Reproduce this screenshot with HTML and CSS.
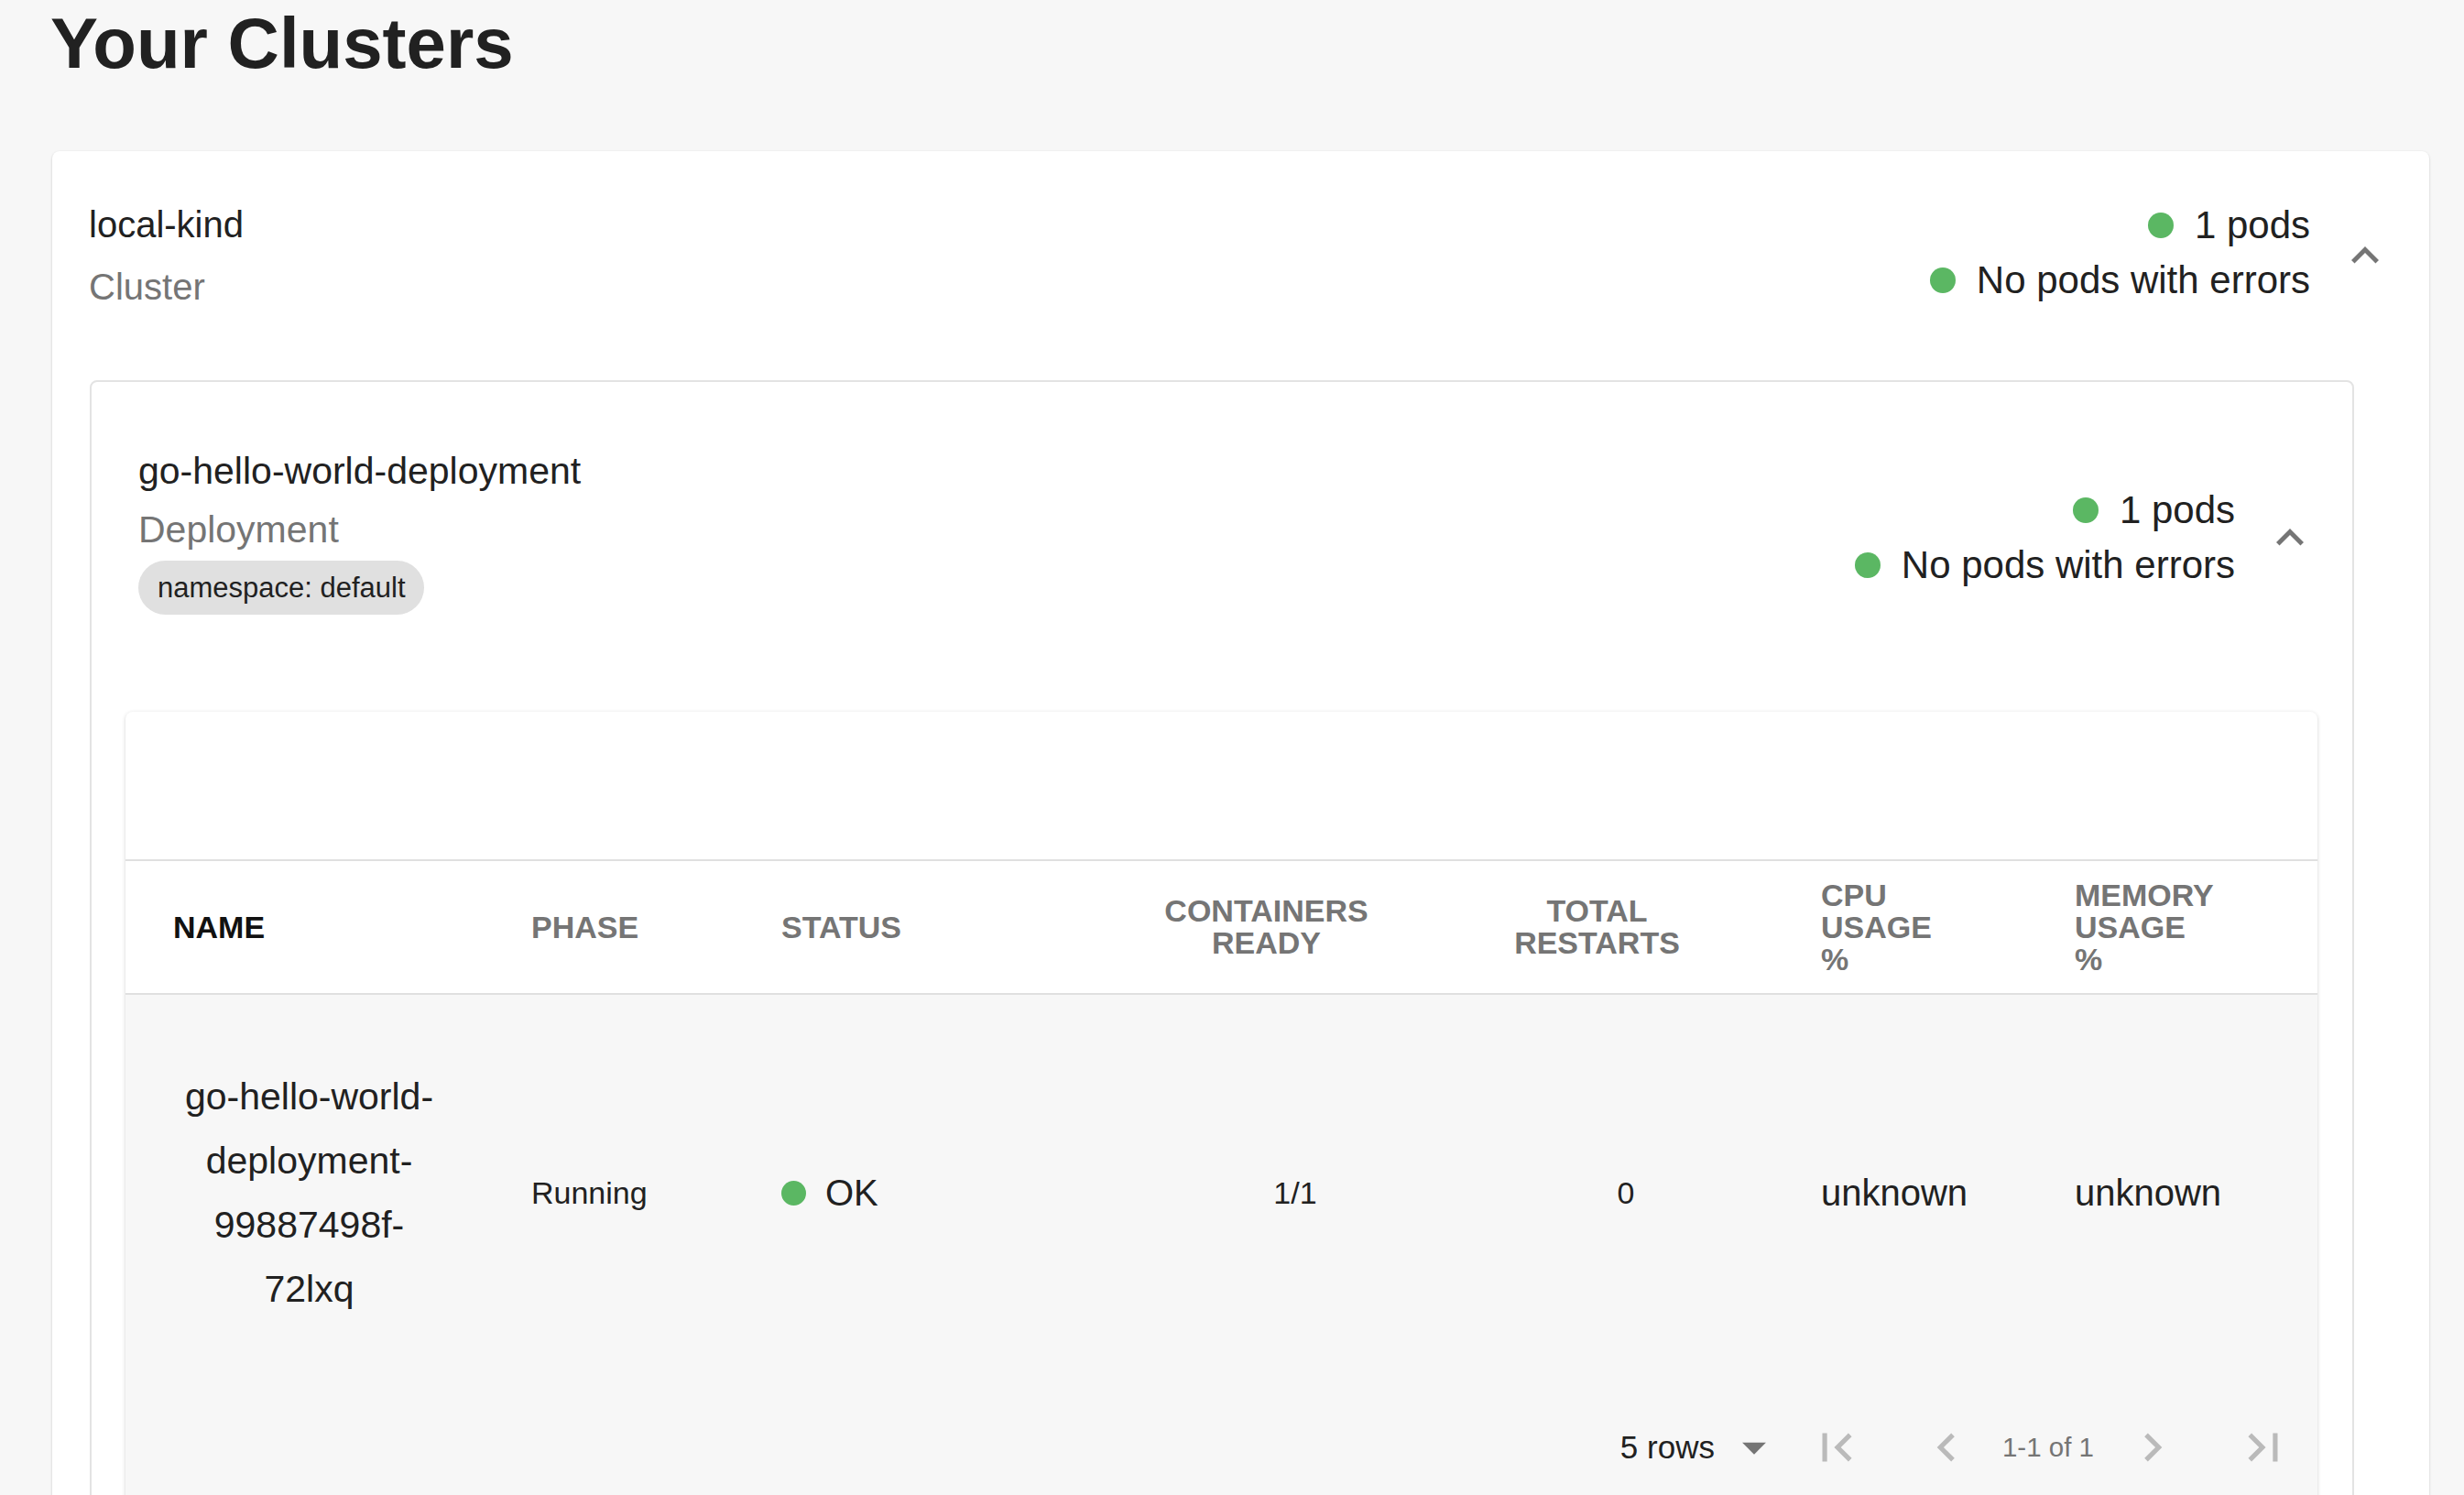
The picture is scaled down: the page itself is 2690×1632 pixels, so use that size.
FILE: index.html
```html
<!DOCTYPE html>
<html lang="en">
<head>
<meta charset="utf-8">
<title>Your Clusters</title>
<link rel="stylesheet" href="styles.css">
</head>
<body>
<div class="page">
  <h1 class="title">Your Clusters</h1>

  <section class="card cluster">
    <div class="summary cluster-summary">
      <div class="info">
        <div class="name">local-kind</div>
        <div class="kind">Cluster</div>
      </div>
      <div class="side">
        <div class="pods pods-cluster">
          <div class="pod-line"><span class="dot"></span>1 pods</div>
          <div class="pod-line"><span class="dot"></span>No pods with errors</div>
        </div>
        <svg class="expand" viewBox="0 0 24 24"><path d="M12 8l-6 6 1.41 1.41L12 10.83l4.59 4.58L18 14z"/></svg>
      </div>
    </div>

    <div class="details">
      <section class="deployment">
        <div class="summary dep-summary">
          <div class="info">
            <div class="name dep-name">go-hello-world-deployment</div>
            <div class="kind dep-kind">Deployment</div>
            <span class="chip">namespace: default</span>
          </div>
          <div class="side side-dep">
            <div class="pods">
              <div class="pod-line"><span class="dot"></span>1 pods</div>
              <div class="pod-line"><span class="dot"></span>No pods with errors</div>
            </div>
            <svg class="expand" viewBox="0 0 24 24"><path d="M12 8l-6 6 1.41 1.41L12 10.83l4.59 4.58L18 14z"/></svg>
          </div>
        </div>

        <div class="paper">
          <div class="toolbar"></div>
          <div class="grid thead">
            <div class="th th-active">NAME</div>
            <div class="th">PHASE</div>
            <div class="th">STATUS</div>
            <div class="th th-center th-containers"><span class="lbl lbl-wide">CONTAINERS READY</span></div>
            <div class="th th-center th-restarts"><span class="lbl lbl-mid">TOTAL RESTARTS</span></div>
            <div class="th"><span class="lbl lbl-narrow">CPU USAGE %</span></div>
            <div class="th"><span class="lbl lbl-narrow">MEMORY USAGE %</span></div>
          </div>
          <div class="grid trow">
            <div class="td td-name"><div class="pod-name">go-hello-world-<wbr>deployment-<wbr>99887498f-<wbr>72lxq</div></div>
            <div class="td td-small">Running</div>
            <div class="td td-status"><span class="dot dot-sm"></span>OK</div>
            <div class="td td-small td-center td-containers">1/1</div>
            <div class="td td-small td-center td-restarts">0</div>
            <div class="td td-large">unknown</div>
            <div class="td td-large">unknown</div>
          </div>
          <div class="pager">
            <span class="rows">5 rows</span>
            <svg class="picon picon-drop" viewBox="0 0 24 24"><path d="M7 10l5 5 5-5z"/></svg>
            <svg class="picon picon-first" viewBox="0 0 24 24"><path d="M18.41 16.59L13.82 12l4.59-4.59L17 6l-6 6 6 6zM6 6h2v12H6z"/></svg>
            <svg class="picon picon-prev" viewBox="0 0 24 24"><path d="M15.41 7.41L14 6l-6 6 6 6 1.41-1.41L10.83 12z"/></svg>
            <span class="range">1-1 of 1</span>
            <svg class="picon picon-next" viewBox="0 0 24 24"><path d="M10 6L8.59 7.41 13.17 12l-4.58 4.59L10 18l6-6z"/></svg>
            <svg class="picon picon-last" viewBox="0 0 24 24"><path d="M5.59 7.41L10.18 12l-4.59 4.59L7 18l6-6-6-6zM16 6h2v12h-2z"/></svg>
          </div>
        </div>
      </section>
    </div>
  </section>
</div>
</body>
</html>
```

FILE: styles.css
```css
html {
  overflow: hidden;
}

body {
  margin: 0;
  background: #f7f7f7;
  font-family: "Liberation Sans", Arial, Helvetica, sans-serif;
  color: #212121;
}

.page {
  padding: 8px 38px 200px 57px;
}

.title {
  margin: 0 0 0 -2px;
  font-size: 78px;
  line-height: 78px;
  font-weight: 700;
  color: #212121;
}

.card {
  margin-top: 79px;
  background: #fff;
  border-radius: 8px;
  box-shadow: 0 1px 3px rgba(0, 0, 0, 0.14), 0 1px 2px rgba(0, 0, 0, 0.08);
}

.summary {
  display: flex;
  align-items: center;
}

.cluster-summary {
  padding: 46px 40px 0 40px;
}

.info .name {
  font-size: 40px;
  line-height: 68px;
  color: #212121;
}

.info .kind {
  font-size: 40px;
  line-height: 68px;
  color: #757575;
}

.side {
  margin-left: auto;
  display: flex;
  align-items: center;
}

.pods {
  font-size: 42px;
  line-height: 60px;
  color: #212121;
}

.pods-cluster {
  padding-bottom: 7px;
}

.pod-line {
  display: flex;
  align-items: center;
  justify-content: flex-end;
}

.dot {
  display: inline-block;
  width: 28px;
  height: 28px;
  border-radius: 50%;
  background: #5bb763;
  margin-right: 23px;
  flex: none;
}

.expand {
  width: 60px;
  height: 60px;
  margin-left: 30px;
  fill: #757575;
  flex: none;
}

.details {
  padding: 68px 82px 40px 41px;
}

.deployment {
  border: 2px solid #e3e3e3;
  border-radius: 8px;
  padding: 0 38px 40px 37px;
}

.dep-summary {
  padding: 65px 0 0 14px;
}

.info .dep-name,
.info .dep-kind {
  font-size: 41px;
  line-height: 64px;
}

.chip {
  display: inline-flex;
  align-items: center;
  height: 59px;
  margin-top: 2px;
  padding: 0 20px 0 21px;
  border-radius: 30px;
  background: #e0e0e0;
  font-size: 31px;
  color: #212121;
}

.side-dep {
  padding-top: 20px;
}

.paper {
  margin-top: 106px;
  background: #fff;
  border-radius: 8px;
  overflow: hidden;
  box-shadow: 0 1px 4px rgba(0, 0, 0, 0.16), 0 2px 2px rgba(0, 0, 0, 0.06);
}

.toolbar {
  height: 161px;
  border-bottom: 2px solid #e0e0e0;
}

.grid {
  display: grid;
  grid-template-columns: 391px 273px 409px 390px 336px 277px 317px;
  align-items: center;
}

.thead {
  height: 144px;
  border-bottom: 2px solid #e0e0e0;
}

.th {
  padding-left: 52px;
  font-size: 34px;
  line-height: 35px;
  font-weight: 700;
  color: #757575;
}

.th-active {
  color: #111;
}

.th-center {
  text-align: center;
  padding-right: 63px;
}

.th-containers {
  padding-left: 18px;
}

.th-restarts {
  padding-left: 14px;
}

.lbl {
  display: inline-block;
}

.lbl-wide {
  max-width: 260px;
}

.lbl-mid {
  max-width: 240px;
}

.lbl-narrow {
  max-width: 160px;
}

.trow {
  background: #f7f7f7;
  padding: 76px 0;
}

.td {
  padding-left: 52px;
  color: #212121;
}

.td-name {
  padding-left: 58px;
}

.pod-name {
  width: 285px;
  text-align: center;
  font-size: 41px;
  line-height: 70px;
}

.td-small {
  font-size: 34px;
}

.td-large {
  font-size: 40px;
}

.td-status {
  display: flex;
  align-items: center;
  font-size: 40px;
}

.dot-sm {
  width: 27px;
  height: 27px;
  margin-right: 21px;
}

.td-center {
  text-align: center;
}

.td-containers {
  padding-left: 18px;
}

.td-restarts {
  padding-left: 14px;
}

.pager {
  height: 124px;
  background: #f7f7f7;
  display: flex;
  justify-content: flex-end;
  align-items: center;
  padding-right: 28px;
}

.rows {
  font-size: 35px;
  color: #212121;
}

.range {
  font-size: 29.5px;
  color: #757575;
  margin-left: 30px;
}

.picon {
  width: 62px;
  height: 62px;
  fill: #bababa;
  flex: none;
}

.picon-drop {
  fill: #757575;
  margin-left: 12px;
}

.picon-first {
  margin-left: 28px;
}

.picon-prev {
  margin-left: 58px;
}

.picon-next {
  margin-left: 33px;
}

.picon-last {
  margin-left: 59px;
}
```
